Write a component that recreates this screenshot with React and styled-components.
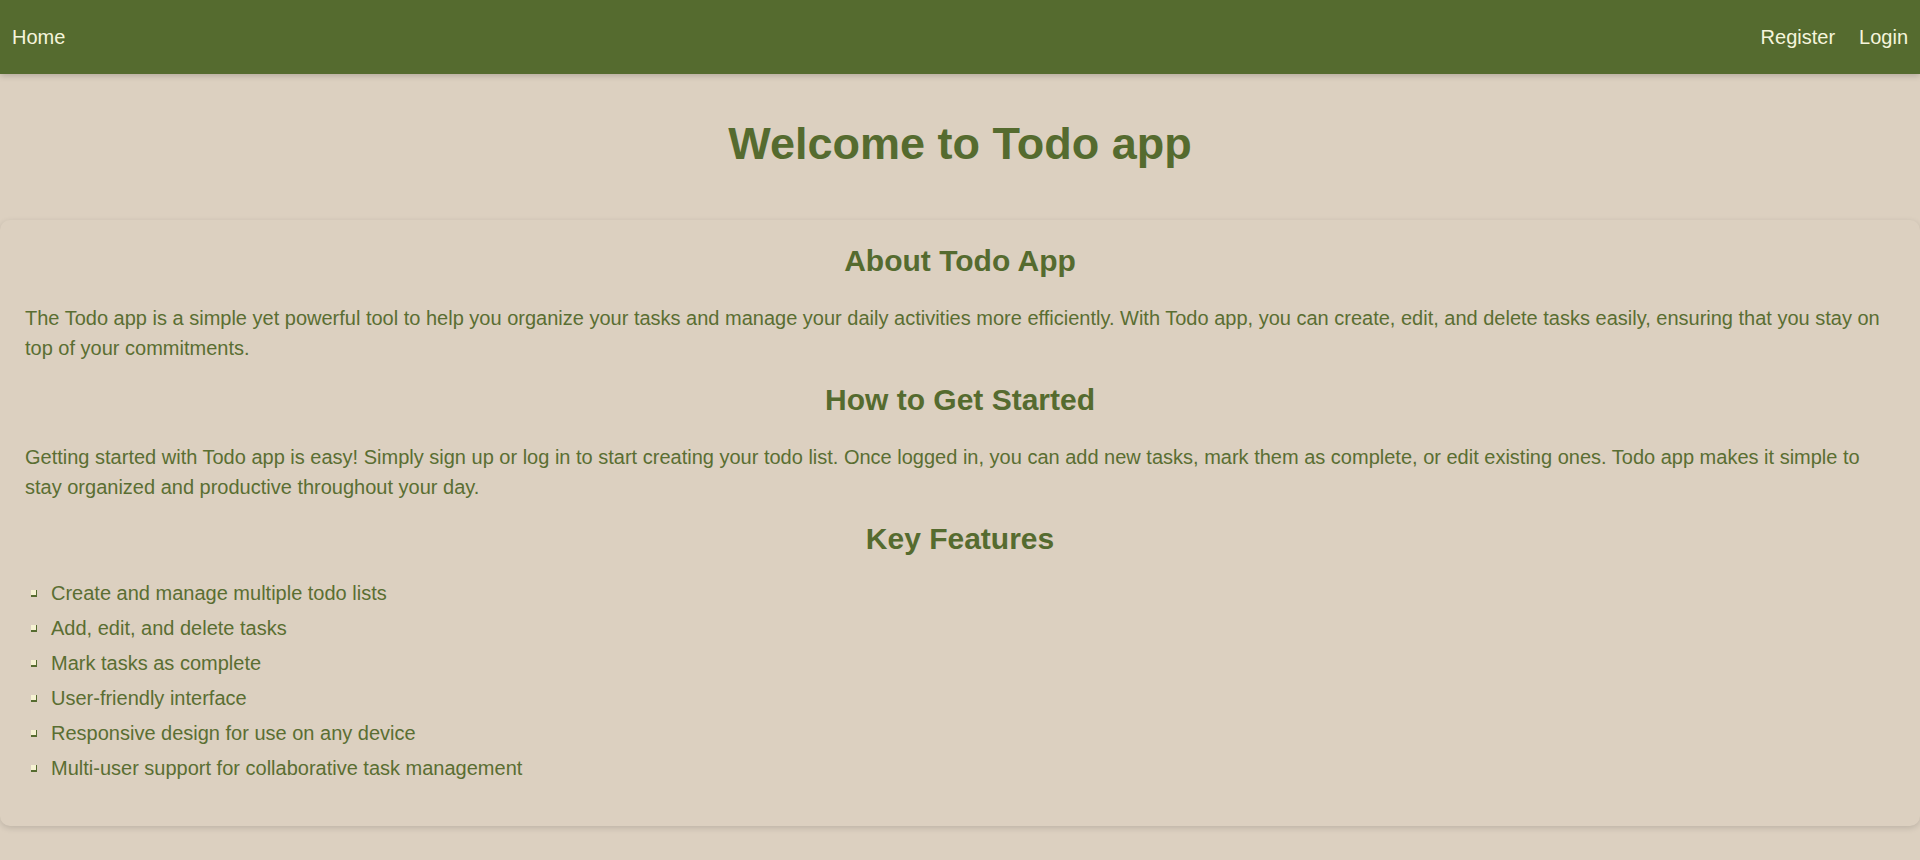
import React from "react";
import styled, { createGlobalStyle } from "styled-components";

const GlobalStyle = createGlobalStyle`
  html, body {
    margin: 0;
    padding: 0;
    background: #dcd0c0;
    font-family: "Liberation Sans", Arial, sans-serif;
    color: #556b2f;
  }
  * { box-sizing: border-box; }
`;

const Page = styled.div`
  min-height: 860px;
  background: #dcd0c0;
`;

const NavBar = styled.nav`
  height: 74px;
  background: #556b2f;
  display: flex;
  align-items: center;
  justify-content: space-between;
  box-shadow: 0 2px 6px rgba(0, 0, 0, 0.18);
  position: relative;
  z-index: 1;
`;

const NavGroup = styled.div`
  display: flex;
  align-items: center;
`;

const NavLink = styled.a`
  color: #f5f5dc;
  text-decoration: none;
  font-size: 20px;
  padding: 0 12px;
  line-height: 74px;
  cursor: pointer;
`;

const Title = styled.h1`
  margin: 0;
  padding: 44px 0 50px;
  text-align: center;
  font-size: 45px;
  font-weight: 700;
  color: #556b2f;
`;

const Card = styled.section`
  background: #dcd0c0;
  border-radius: 10px;
  box-shadow: 0 2px 6px rgba(0, 0, 0, 0.14);
  padding: 24px 25px 21px;
`;

const SectionTitle = styled.h2`
  margin: 0 0 20px;
  text-align: center;
  font-size: 30px;
  font-weight: 700;
  color: #556b2f;
`;

const Paragraph = styled.p`
  margin: 25px 0 20px;
  font-size: 20px;
  line-height: 30px;
  color: #5a6e32;
`;

const FeatureList = styled.ul`
  list-style: none;
  margin: 22px 0 22px;
  padding: 0 0 0 6px;
`;

const FeatureItem = styled.li`
  display: flex;
  align-items: center;
  gap: 14px;
  font-size: 20px;
  line-height: 30px;
  margin-bottom: 5px;
  color: #5a6e32;
`;

const Bullet = styled.span`
  flex: none;
  width: 6px;
  height: 7px;
  background: #f6f2d2;
  border-right: 1px solid #556b2f;
  border-bottom: 2px solid #556b2f;
  margin-top: 1px;
`;

const features = [
  "Create and manage multiple todo lists",
  "Add, edit, and delete tasks",
  "Mark tasks as complete",
  "User-friendly interface",
  "Responsive design for use on any device",
  "Multi-user support for collaborative task management",
];

export default function App() {
  return (
    <Page>
      <GlobalStyle />
      <NavBar>
        <NavGroup>
          <NavLink>Home</NavLink>
        </NavGroup>
        <NavGroup>
          <NavLink>Register</NavLink>
          <NavLink>Login</NavLink>
        </NavGroup>
      </NavBar>
      <Title>Welcome to Todo app</Title>
      <Card>
        <SectionTitle>About Todo App</SectionTitle>
        <Paragraph>
          The Todo app is a simple yet powerful tool to help you organize your tasks and manage your daily
          activities more efficiently. With Todo app, you can create, edit, and delete tasks easily, ensuring
          that you stay on top of your commitments.
        </Paragraph>
        <SectionTitle>How to Get Started</SectionTitle>
        <Paragraph>
          Getting started with Todo app is easy! Simply sign up or log in to start creating your todo list.
          Once logged in, you can add new tasks, mark them as complete, or edit existing ones. Todo app makes
          it simple to stay organized and productive throughout your day.
        </Paragraph>
        <SectionTitle>Key Features</SectionTitle>
        <FeatureList>
          {features.map((f) => (
            <FeatureItem key={f}>
              <Bullet />
              {f}
            </FeatureItem>
          ))}
        </FeatureList>
      </Card>
    </Page>
  );
}
